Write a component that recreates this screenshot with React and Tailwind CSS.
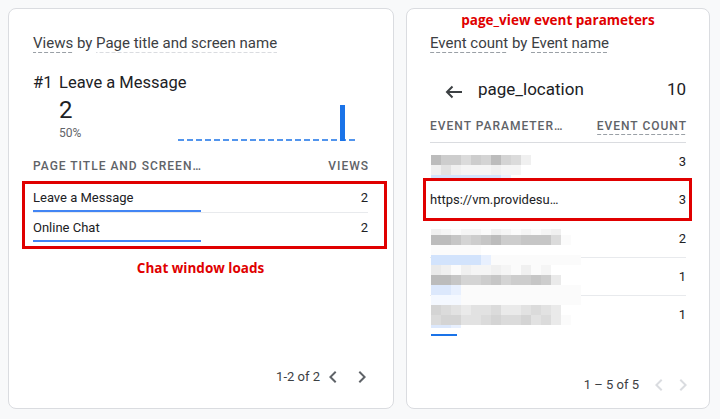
import React from 'react';

// pixelated stand-ins for redacted parameter values
const SHADES = {
  '0': 'bg-[#bcbcbc]',
  '1': 'bg-[#c6c6c6]',
  '2': 'bg-[#cdcdcd]',
  '3': 'bg-[#d4d4d4]',
  '4': 'bg-[#dbdbdb]',
  '5': 'bg-[#e2e2e2]',
  '6': 'bg-[#eaeaea]',
  '7': 'bg-[#f0f0f0]',
  '8': 'bg-[#f5f5f5]',
  '9': 'bg-[#fbfbfb]',
  B: 'bg-[#d2e3fc]',
  C: 'bg-[#dce8fc]',
  D: 'bg-[#e8f0fe]',
  E: 'bg-[#f4f8ff]',
};

const topMosaic = [
  ['h-[10px]', '0224230347'],
  ['h-[10px]', '757888788'],
  ['h-[3px]', 'BBBBBBBD'],
];

const lowerMosaic = [
  ['h-[6px]', '7898897898987'],
  ['h-[10px]', '00132102211149'],
  ['h-[10px]', '99999'],
  ['h-[10px]', 'BBBBBD999999999'],
  ['h-[10px]', '679788789798'],
  ['h-[10px]', '0013321322126'],
  ['h-[10px]', 'CCD999999999999'],
  ['h-[10px]', 'EEE999999999999'],
  ['h-[10px]', '3456554665456'],
  ['h-[10px]', '43355434435469'],
  ['h-[3px]', 'CCD'],
];

const Mosaic = ({ rows, className }) => (
  <div className={`absolute flex flex-col ${className}`}>
    {rows.map(([h, cells], i) => (
      <div key={i} className={`flex ${h}`}>
        {cells.split('').map((c, j) => (
          <div key={j} className={`w-[10px] ${SHADES[c]}`} />
        ))}
      </div>
    ))}
  </div>
);

const Dashed = ({ children, light }) => (
  <span
    className={`inline-block h-[20px] bg-bottom bg-repeat-x bg-[length:6px_1px] ${
      light
        ? 'bg-[linear-gradient(to_right,#dadce0_60%,transparent_0)]'
        : 'bg-[linear-gradient(to_right,#9aa0a6_60%,transparent_0)]'
    }`}
  >
    {children}
  </span>
);

const Chevron = ({ dir, muted }) => (
  <svg width="24" height="24" viewBox="0 0 24 24" className={muted ? 'text-[#dadce0]' : 'text-[#5f6368]'}>
    <path
      fill="currentColor"
      d={dir === 'left' ? 'M15.41 7.41 14 6l-6 6 6 6 1.41-1.41L10.83 12z' : 'M8.59 16.59 10 18l6-6-6-6-1.41 1.41L13.17 12z'}
    />
  </svg>
);

const BarChart = () => (
  <svg width="180" height="36" viewBox="0 0 180 36">
    <line x1="0" y1="35" x2="180" y2="35" stroke="#1a73e8" strokeWidth="1.5" strokeDasharray="6 3" />
    <rect x="162" y="0" width="5" height="36" fill="#1a73e8" />
  </svg>
);

const pages = [
  { title: 'Leave a Message', views: 2 },
  { title: 'Online Chat', views: 2 },
];

export default function App() {
  return (
    <div className="w-[720px] h-[419px] bg-[#f8f9fa] flex gap-[12px] pl-[8px] pt-[8px] font-['Roboto',sans-serif] text-[#202124]">
      {/* page views card */}
      <section className="w-[386px] h-[401px] bg-white border border-[#dadce0] rounded-[8px] flex flex-col pl-[24px] pr-[25px]">
        <div className="mt-[24px] text-[15px] leading-[20px] text-[#3c4043]">
          <Dashed>Views</Dashed> by <Dashed light>Page title and screen name</Dashed>
        </div>

        <div className="mt-[18px] flex text-[16.5px] leading-[24px] text-[#202124]">
          <span className="w-[26px]">#1</span>
          <span>Leave a Message</span>
        </div>
        <div className="flex items-start">
          <div className="pl-[26px] pt-[1px]">
            <div className="text-[24px] leading-[28px]">2</div>
            <div className="mt-[1px] text-[12px] leading-[16px] text-[#5f6368]">50%</div>
          </div>
          <div className="ml-auto mr-[10px] mt-[10px]">
            <BarChart />
          </div>
        </div>

        <div className="mt-[17px] flex justify-between text-[12px] leading-[16px] font-medium tracking-[1px] text-[#5f6368]">
          <span>PAGE TITLE AND SCREEN…</span>
          <span className="-mr-[1px]">VIEWS</span>
        </div>

        <div className="mt-[7px] -ml-[11px] -mr-[19px] border-[3px] border-[#e00000] pl-[8px] pr-[16px]">
          {pages.map((p, i) => (
            <div
              key={p.title}
              className={`flex justify-between ${i === 0 ? 'pt-[4px] border-b border-[#e8eaed]' : 'pt-[5px] pb-[4px]'}`}
            >
              <div className="w-1/2">
                <div className="text-[13px] leading-[20px]">{p.title}</div>
                <div className="mt-[2px] h-[2px] bg-[#4285f4]" />
              </div>
              <div className="text-[13px] leading-[20px]">{p.views}</div>
            </div>
          ))}
        </div>

        <div className="mt-[9px] text-center font-['Open_Sans',sans-serif] font-bold text-[13.5px] leading-[20px] text-[#e00000]">
          Chat window loads
        </div>

        <div className="mt-auto mb-[19px] -mr-[6px] flex items-center justify-end text-[13px] text-[#3c4043]">
          <span className="mr-[1px]">1-2 of 2</span>
          <Chevron dir="left" />
          <span className="w-[5px]" />
          <Chevron dir="right" />
        </div>
      </section>

      {/* event parameters card */}
      <section className="w-[304px] h-[401px] bg-white border border-[#dadce0] rounded-[8px] flex flex-col px-[23px]">
        <div className="mt-[1px] text-center font-['Open_Sans',sans-serif] font-bold text-[13.5px] leading-[20px] text-[#e00000]">
          page_view event parameters
        </div>
        <div className="mt-[3px] text-[15px] leading-[20px] text-[#3c4043]">
          <Dashed>Event count</Dashed> by <Dashed>Event name</Dashed>
        </div>

        <div className="mt-[24px] flex items-center text-[17px] leading-[24px]">
          <svg width="18" height="14" viewBox="0 0 18 14" className="ml-[15px] mt-[6px] text-[#3c4043]">
            <path d="M17 7H2M7.5 1.5 2 7l5.5 5.5" fill="none" stroke="currentColor" strokeWidth="2" />
          </svg>
          <span className="ml-[15px]">page_location</span>
          <span className="ml-auto">10</span>
        </div>

        <div className="mt-[17px] pb-[7px] border-b border-[#dadce0] flex justify-between text-[12px] leading-[16px] font-medium tracking-[1px] text-[#5f6368]">
          <span>EVENT PARAMETER…</span>
          <span className="-mr-[1px] inline-block pb-[1px] bg-bottom bg-repeat-x bg-[length:6px_1px] bg-[linear-gradient(to_right,#9aa0a6_60%,transparent_0)]">
            EVENT COUNT
          </span>
        </div>

        <div className="relative h-[35px] flex justify-end text-[13px] pt-[10px] leading-[18px]">
          <Mosaic rows={topMosaic} className="top-[12px] left-[1px]" />
          <span>3</span>
        </div>

        <div className="h-[43px] -ml-[7px] -mr-[6px] border-[3px] border-[#e00000] pl-[4px] pr-[3px] flex items-center justify-between text-[13px] leading-[20px]">
          <span>https://vm.providesu…</span>
          <span>3</span>
        </div>

        <div className="relative text-[13px] leading-[18px]">
          <div className="h-[37px] border-b border-[#e8eaed] flex justify-end pt-[9px]">
            <span>2</span>
          </div>
          <div className="h-[38px] border-b border-[#e8eaed] flex justify-end pt-[10px]">
            <span>1</span>
          </div>
          <div className="h-[38px] flex justify-end pt-[10px]">
            <span>1</span>
          </div>
          <Mosaic rows={lowerMosaic} className="top-[8px] left-[1px]" />
          <div className="absolute top-[113px] left-[1px] w-[26px] h-[2px] bg-[#1a73e8]" />
        </div>

        <div className="mt-auto mb-[11px] -mr-[9px] flex items-center justify-end text-[13px] text-[#3c4043]">
          <span className="mr-[8px]">1 – 5 of 5</span>
          <Chevron dir="left" muted />
          <Chevron dir="right" muted />
        </div>
      </section>
    </div>
  );
}
